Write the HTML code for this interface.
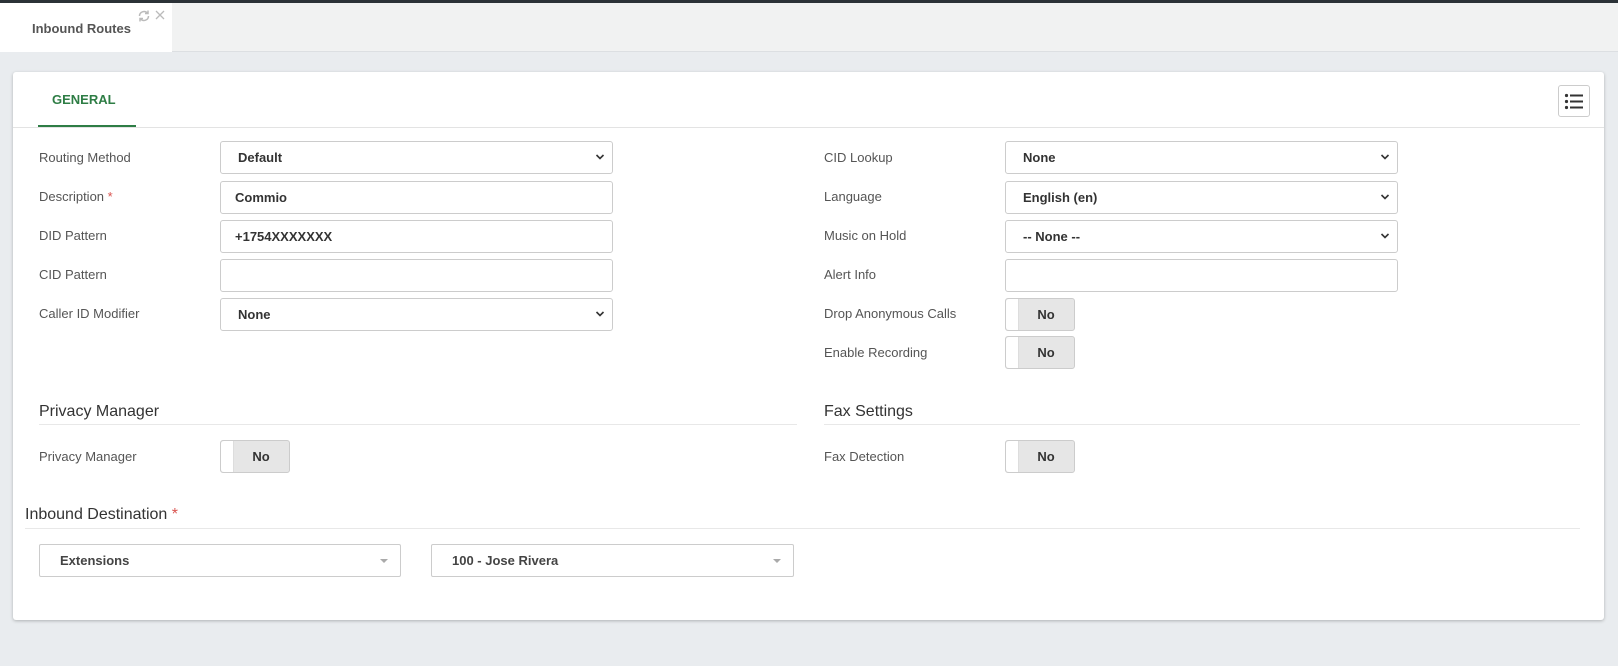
<!DOCTYPE html>
<html><head><meta charset="utf-8"><style>
*{box-sizing:border-box;margin:0;padding:0}
body{width:1618px;height:666px;background:#e9ecef;font-family:"Liberation Sans",Arial,sans-serif;position:relative;overflow:hidden;color:#333}
.abs{position:absolute}
.top{left:0;top:0;width:1618px;height:3px;background:#2b3237}
.hdr{left:0;top:3px;width:1618px;height:49px;background:#f1f2f2;border-bottom:1px solid #dcdfe2}
.tab{left:0;top:3px;width:172px;height:49px;background:#fff}
.tab span{position:absolute;left:32px;top:18px;font-size:13px;font-weight:bold;color:#555}
.card{left:13px;top:72px;width:1591px;height:548px;background:#fff;border-radius:3px;box-shadow:0 1px 3px rgba(0,0,0,.25)}
.gen{left:52px;top:92px;font-size:13px;font-weight:bold;color:#2e7d45}
.ul{left:38px;top:125px;width:98px;height:2px;background:#2e7d45}
.tl{left:13px;top:127px;width:1591px;height:1px;background:#e3e3e3}
.lb{font-size:13px;color:#555}
.ctl{height:33px;border:1px solid #ccc;border-radius:3px;background:#fff;font-size:13px;font-weight:bold;color:#333;padding-left:17px;line-height:31px}
.chev{position:absolute;right:7px;top:11px}
.tg{width:70px;height:33px;border:1px solid #ccc;border-radius:3px;background:#e6e6e6;font-size:13px;font-weight:bold;line-height:31px;text-align:center;padding-left:12px}
.tg:before{content:"";position:absolute;left:0;top:0;width:12px;height:31px;background:#fff;border-right:1px solid #ddd;border-radius:3px 0 0 3px}
.h{font-size:16px;color:#333}
.hl{height:1px;background:#e8e8e8}
.s2{height:33px;border:1px solid #ccc;border-radius:2px;font-size:13px;font-weight:bold;color:#444;padding-left:20px;line-height:31px}
.s2 i{position:absolute;right:12px;top:14px;border-left:4px solid transparent;border-right:4px solid transparent;border-top:4px solid #aaa}
</style></head><body>
<div class="abs top"></div>
<div class="abs hdr"></div>
<div class="abs tab"><span>Inbound Routes</span>
<svg class="abs" style="left:137px;top:6px" width="14" height="14" viewBox="0 0 14 14" fill="none" stroke="#bbb" stroke-width="1.5"><path d="M2.5 7a4.5 4.5 0 0 1 8-2.8M11.5 7a4.5 4.5 0 0 1-8 2.8"/><path d="M11 1.5v3h-3M3 12.5v-3h3"/></svg>
<svg class="abs" style="left:155px;top:7px" width="10" height="10" viewBox="0 0 10 10" stroke="#bbb" stroke-width="1.3"><path d="M1 1l8 8M9 1l-8 8"/></svg>
</div>
<div class="abs card"></div>
<div class="abs gen">GENERAL</div>
<div class="abs ul"></div>
<div class="abs tl"></div>
<div class="abs" style="left:1558px;top:85px;width:32px;height:32px;border:1px solid #ccc;border-radius:3px;background:#fff">
<svg width="30" height="30" viewBox="0 0 30 30"><g fill="#333"><circle cx="7.5" cy="9.5" r="1.6"/><circle cx="7.5" cy="15.5" r="1.6"/><circle cx="7.5" cy="21.5" r="1.6"/><rect x="11" y="8.5" width="13" height="2"/><rect x="11" y="14.5" width="13" height="2"/><rect x="11" y="20.5" width="13" height="2"/></g></svg></div>

<!-- left col -->
<div class="abs lb" style="left:39px;top:150px">Routing Method</div>
<div class="abs ctl" style="left:220px;top:141px;width:393px">Default<svg class="chev" width="10" height="8" viewBox="0 0 10 8"><path d="M1.5 2l3.5 3.5 3.5-3.5" stroke="#333" stroke-width="1.6" fill="none"/></svg></div>
<div class="abs lb" style="left:39px;top:189px">Description <span style="color:#d9534f">*</span></div>
<div class="abs ctl" style="left:220px;top:181px;width:393px;padding-left:14px">Commio</div>
<div class="abs lb" style="left:39px;top:228px">DID Pattern</div>
<div class="abs ctl" style="left:220px;top:220px;width:393px;padding-left:14px">+1754XXXXXXX</div>
<div class="abs lb" style="left:39px;top:267px">CID Pattern</div>
<div class="abs ctl" style="left:220px;top:259px;width:393px"></div>
<div class="abs lb" style="left:39px;top:306px">Caller ID Modifier</div>
<div class="abs ctl" style="left:220px;top:298px;width:393px">None<svg class="chev" width="10" height="8" viewBox="0 0 10 8"><path d="M1.5 2l3.5 3.5 3.5-3.5" stroke="#333" stroke-width="1.6" fill="none"/></svg></div>

<!-- right col -->
<div class="abs lb" style="left:824px;top:150px">CID Lookup</div>
<div class="abs ctl" style="left:1005px;top:141px;width:393px">None<svg class="chev" width="10" height="8" viewBox="0 0 10 8"><path d="M1.5 2l3.5 3.5 3.5-3.5" stroke="#333" stroke-width="1.6" fill="none"/></svg></div>
<div class="abs lb" style="left:824px;top:189px">Language</div>
<div class="abs ctl" style="left:1005px;top:181px;width:393px">English (en)<svg class="chev" width="10" height="8" viewBox="0 0 10 8"><path d="M1.5 2l3.5 3.5 3.5-3.5" stroke="#333" stroke-width="1.6" fill="none"/></svg></div>
<div class="abs lb" style="left:824px;top:228px">Music on Hold</div>
<div class="abs ctl" style="left:1005px;top:220px;width:393px">-- None --<svg class="chev" width="10" height="8" viewBox="0 0 10 8"><path d="M1.5 2l3.5 3.5 3.5-3.5" stroke="#333" stroke-width="1.6" fill="none"/></svg></div>
<div class="abs lb" style="left:824px;top:267px">Alert Info</div>
<div class="abs ctl" style="left:1005px;top:259px;width:393px"></div>
<div class="abs lb" style="left:824px;top:306px">Drop Anonymous Calls</div>
<div class="abs tg" style="left:1005px;top:298px">No</div>
<div class="abs lb" style="left:824px;top:345px">Enable Recording</div>
<div class="abs tg" style="left:1005px;top:336px">No</div>

<div class="abs h" style="left:39px;top:403px">Privacy Manager</div>
<div class="abs hl" style="left:39px;top:424px;width:758px"></div>
<div class="abs h" style="left:824px;top:403px">Fax Settings</div>
<div class="abs hl" style="left:824px;top:424px;width:756px"></div>
<div class="abs lb" style="left:39px;top:449px">Privacy Manager</div>
<div class="abs tg" style="left:220px;top:440px">No</div>
<div class="abs lb" style="left:824px;top:449px">Fax Detection</div>
<div class="abs tg" style="left:1005px;top:440px">No</div>

<div class="abs h" style="left:25px;top:506px">Inbound Destination <span style="color:#d9534f">*</span></div>
<div class="abs hl" style="left:25px;top:528px;width:1555px"></div>
<div class="abs s2" style="left:39px;top:544px;width:362px">Extensions<i></i></div>
<div class="abs s2" style="left:431px;top:544px;width:363px">100 - Jose Rivera<i></i></div>
</body></html>
